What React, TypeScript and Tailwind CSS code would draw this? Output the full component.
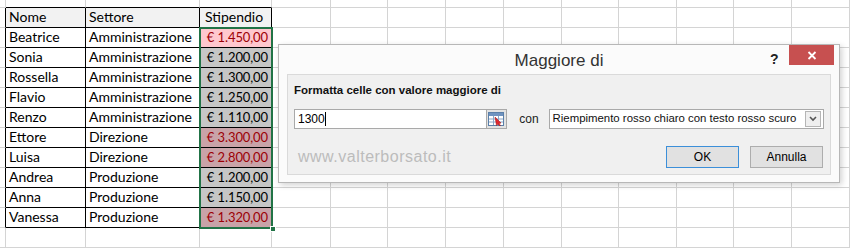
import React from 'react';

const colWidths = [6, 80, 114, 72, 59, 57, 58, 58, 58, 57, 58, 57, 58, 58];

type Row = { nome: string; settore: string; stipendio: string; hit: boolean };

const rows: Row[] = [
  { nome: 'Beatrice', settore: 'Amministrazione', stipendio: '€ 1.450,00', hit: true },
  { nome: 'Sonia', settore: 'Amministrazione', stipendio: '€ 1.200,00', hit: false },
  { nome: 'Rossella', settore: 'Amministrazione', stipendio: '€ 1.300,00', hit: false },
  { nome: 'Flavio', settore: 'Amministrazione', stipendio: '€ 1.250,00', hit: false },
  { nome: 'Renzo', settore: 'Amministrazione', stipendio: '€ 1.110,00', hit: false },
  { nome: 'Ettore', settore: 'Direzione', stipendio: '€ 3.300,00', hit: true },
  { nome: 'Luisa', settore: 'Direzione', stipendio: '€ 2.800,00', hit: true },
  { nome: 'Andrea', settore: 'Produzione', stipendio: '€ 1.200,00', hit: false },
  { nome: 'Anna', settore: 'Produzione', stipendio: '€ 1.150,00', hit: false },
  { nome: 'Vanessa', settore: 'Produzione', stipendio: '€ 1.320,00', hit: true },
];

const cellFont = { fontFamily: 'Lato, "Liberation Sans", sans-serif' };
const uiFont = { fontFamily: '"Liberation Sans", Arial, sans-serif' };

// una riga di celle vuote della griglia
function EmptyRow({ h, blackBottom }: { h: string; blackBottom?: boolean }) {
  return (
    <div className={`flex ${h}`}>
      {colWidths.map((w, i) => (
        <div
          key={i}
          style={{ width: w }}
          className={`shrink-0 border-r border-b border-r-[#d4d4d4] ${
            blackBottom && i >= 1 && i <= 3 ? 'border-b-black' : 'border-b-[#d4d4d4]'
          }`}
        />
      ))}
    </div>
  );
}

function DataRow({ cells, header, row, index }: { cells: string[]; header?: boolean; row?: Row; index: number }) {
  let stipBg = 'bg-white';
  let stipText = 'text-black';
  if (header) stipBg = 'bg-[#f2f2f2]';
  else if (row) {
    if (row.hit) {
      stipBg = index === 0 ? 'bg-[#ffc7ce]' : 'bg-[#c9a3a8]';
      stipText = 'text-[#9c0006]';
    } else {
      stipBg = 'bg-[#c6c6c6]';
    }
  }
  return (
    <div className="flex h-5">
      <div style={{ width: colWidths[0] }} className="shrink-0 border-r border-b border-r-black border-b-[#d4d4d4]" />
      {cells.map((c, i) => {
        const isStip = i === 2;
        return (
          <div
            key={i}
            style={{ width: colWidths[i + 1] }}
            className={`shrink-0 border-r border-b border-black flex items-end pb-[1px] leading-[18px] overflow-hidden whitespace-nowrap ${
              header ? 'bg-[#f2f2f2]' : ''
            } ${isStip && !header ? `justify-end pr-[3px] text-[13px] tracking-[-0.1px] ${stipBg} ${stipText}` : 'pl-[3px] text-[14px]'} ${
              isStip && header ? 'pl-[5px]' : ''
            }`}
          >
            {c}
          </div>
        );
      })}
      {colWidths.slice(4).map((w, i) => (
        <div key={i} style={{ width: w }} className="shrink-0 border-r border-b border-[#d4d4d4]" />
      ))}
    </div>
  );
}

function RefEditIcon() {
  return (
    <svg width="16" height="14" viewBox="0 0 16 14">
      <rect x="0.5" y="0.5" width="15" height="13" fill="#ffffff" stroke="#5b7fa8" />
      <rect x="1" y="1" width="14" height="3" fill="#6f93c0" />
      <line x1="1" y1="7" x2="15" y2="7" stroke="#8aa6c8" />
      <line x1="1" y1="10" x2="15" y2="10" stroke="#8aa6c8" />
      <line x1="5.5" y1="4" x2="5.5" y2="13" stroke="#8aa6c8" />
      <line x1="10.5" y1="4" x2="10.5" y2="13" stroke="#8aa6c8" />
      <path d="M7 5 L13 11 L11 11.5 L12.5 13.5 L11.5 14 L10 12 L8.5 13.5 Z" fill="#e0282e" stroke="#a01010" strokeWidth="0.5" />
    </svg>
  );
}

function Dialog() {
  return (
    <div
      style={uiFont}
      className="absolute left-[278px] top-[44px] w-[562px] h-[139px] bg-[#fbfbfb] border border-[#b7b7b7] shadow-[2px_2px_6px_rgba(0,0,0,0.18)]"
    >
      <div className="relative h-[29px] flex items-center justify-center">
        <span className="text-[17px] text-[#333333] pt-[2px]">Maggiore di</span>
        <span className="absolute left-[491px] top-[4px] text-[14px] font-bold text-[#222]">?</span>
        <div className="absolute right-[5px] top-0 w-[45px] h-[20px] bg-[#c75050] flex items-center justify-center">
          <svg width="10" height="9" viewBox="0 0 10 9">
            <path d="M1.5 1 L8.5 8 M8.5 1 L1.5 8" stroke="#ffffff" strokeWidth="1.8" />
          </svg>
        </div>
      </div>
      <div className="mx-[8px] h-[101px] bg-[#f0f0f0] border border-[#dadada] px-[6px] pt-[8px]">
        <div className="text-[11.5px] font-bold text-[#111] leading-[14px]">Formatta celle con valore maggiore di</div>
        <div className="flex items-center mt-[12px] h-[20px]">
          <div className="w-[195px] h-[20px] bg-white border border-[#a9a9a9] flex items-center pl-[3px] text-[12px] text-black">
            1300<span className="inline-block w-px h-[14px] bg-black" />
          </div>
          <div className="w-[21px] h-[20px] bg-[#e3e3e3] border border-[#a9a9a9] border-l-0 flex items-center justify-center">
            <RefEditIcon />
          </div>
          <span className="ml-[12px] text-[12px] text-[#222]">con</span>
          <div className="ml-[10px] w-[279px] h-[20px] bg-white border border-[#a9a9a9] flex items-center justify-between pl-[3px] pr-[2px]">
            <span className="text-[11.4px] text-[#111] whitespace-nowrap">Riempimento rosso chiaro con testo rosso scuro</span>
            <div className="w-[16px] h-[16px] bg-[#efefef] border border-[#b5b5b5] flex items-center justify-center">
              <svg width="8" height="6" viewBox="0 0 8 6">
                <path d="M1 1 L4 4 L7 1" stroke="#555" strokeWidth="1.6" fill="none" />
              </svg>
            </div>
          </div>
        </div>
        <div className="flex items-start mt-[16px]">
          <span className="ml-[4px] text-[16px] text-[#bcbcbc] tracking-[0.5px]">www.valterborsato.it</span>
          <div className="ml-auto flex gap-[11px] mr-[1px] mt-[1px]">
            <button className="w-[73px] h-[22px] bg-[#e1e1e1] border border-[#3c8fd9] text-[12px] text-black">OK</button>
            <button className="w-[73px] h-[22px] bg-[#e1e1e1] border border-[#adadad] text-[12px] text-black">Annulla</button>
          </div>
        </div>
      </div>
    </div>
  );
}

export default function App() {
  return (
    <div className="relative w-[850px] h-[248px] bg-white overflow-hidden" style={cellFont}>
      <EmptyRow h="h-[8px]" blackBottom />
      <DataRow index={-1} header cells={['Nome', 'Settore', 'Stipendio']} />
      {rows.map((r, i) => (
        <DataRow key={i} index={i} row={r} cells={[r.nome, r.settore, r.stipendio]} />
      ))}
      <EmptyRow h="h-5" />

      {/* selezione verde sulla colonna Stipendio */}
      <div className="absolute left-[199px] top-[27px] w-[74px] h-[202px] border-2 border-[#217346] pointer-events-none" />
      <div className="absolute left-[270px] top-[226px] w-[6px] h-[6px] bg-[#217346] border border-white" />

      <Dialog />
    </div>
  );
}
